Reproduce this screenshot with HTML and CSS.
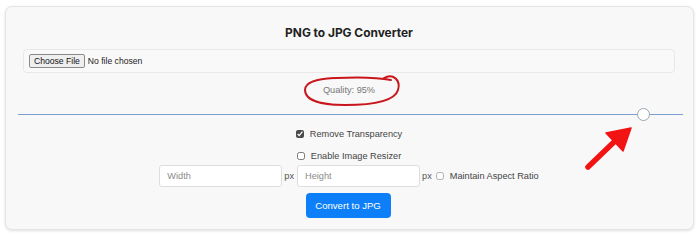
FILE: index.html
```html
<!DOCTYPE html>
<html lang="en">
<head>
<meta charset="utf-8">
<title>PNG to JPG Converter</title>
<link rel="stylesheet" href="styles.css">
</head>
<body>
<div class="card">
  <h1 class="title">PNG to JPG Converter</h1>
  <div class="file-box">
    <input type="file" class="file-input" accept="image/png">
  </div>
  <div class="quality">Quality: 95%</div>
  <input type="range" class="slider" min="0" max="100" value="95">
  <label class="check-row"><input type="checkbox" class="check" checked> Remove Transparency</label>
  <label class="check-row check-row-2"><input type="checkbox" class="check"> Enable Image Resizer</label>
  <div class="size-row">
    <input type="text" class="size-input" placeholder="Width">
    <span class="unit">px</span>
    <input type="text" class="size-input" placeholder="Height">
    <span class="unit">px</span>
    <label class="aspect"><input type="checkbox" class="check check-light"> Maintain Aspect Ratio</label>
  </div>
  <button class="convert">Convert to JPG</button>
</div>
<svg class="annot" width="700" height="235" viewBox="0 0 700 235">
  <path d="M384 78 C393 73, 401 80, 398 90 C395 100, 378 105, 345 105 C320 105, 305 100, 305 90 C305 82, 316 79, 336 78 C356 77, 376 77, 391 80" fill="none" stroke="#c8161c" stroke-width="2" stroke-linecap="round"/>
  <line x1="588" y1="167" x2="614" y2="142" stroke="#f21313" stroke-width="5.5" stroke-linecap="round"/>
  <polygon points="631,128 606,133 623,151" fill="#f21313" stroke="#f21313" stroke-width="1.5" stroke-linejoin="round"/>
</svg>
</body>
</html>
```
FILE: styles.css
```css
html, body {
  margin: 0;
  padding: 0;
  background: #ffffff;
}
body {
  font-family: "Liberation Sans", Arial, sans-serif;
  width: 700px;
  height: 235px;
  position: relative;
  overflow: hidden;
}
.card {
  box-sizing: border-box;
  margin: 6px 0 0 5px;
  width: 689px;
  height: 224px;
  background: #f8f8f8;
  border: 1px solid #e4e4e4;
  border-radius: 7px;
  box-shadow: 0 1px 3px rgba(0, 0, 0, 0.13);
  padding: 0 18px 0 17px;
  display: flex;
  flex-direction: column;
  align-items: stretch;
}
.title {
  margin: 16px 0 0;
  font-family: Inter, "Open Sans", sans-serif;
  font-weight: 700;
  font-size: 11.9px;
  line-height: 20px;
  color: #222;
  text-align: center;
}
.file-box {
  margin-top: 6px;
  height: 24px;
  box-sizing: border-box;
  background: #f9f9f9;
  border: 1px solid #e8e8e8;
  border-radius: 4px;
  display: flex;
  align-items: center;
  padding-left: 5px;
}
.file-input {
  font-family: "Liberation Sans", Arial, sans-serif;
  font-size: 8.6px;
  color: #222;
}
.file-input::file-selector-button {
  font-family: "Liberation Sans", Arial, sans-serif;
  font-size: 8.6px;
  background: #efefef;
  border: 1px solid #8a8a8a;
  border-radius: 2px;
  padding: 1px 4px;
  margin-right: 3px;
  color: #111;
}
.quality {
  margin-top: 10px;
  text-align: center;
  font-size: 9.2px;
  line-height: 14px;
  color: #777;
}
.slider {
  -webkit-appearance: none;
  appearance: none;
  margin: 11px -8px 0 -5px;
  height: 13px;
  background: transparent;
}
.slider::-webkit-slider-runnable-track {
  height: 1px;
  background: #7b9fcf;
}
.slider::-webkit-slider-thumb {
  -webkit-appearance: none;
  width: 13px;
  height: 13px;
  margin-top: -6px;
  border-radius: 50%;
  background: #ffffff;
  border: 1px solid #9aa6b4;
  box-sizing: border-box;
}
.check-row {
  margin-top: 6px;
  display: flex;
  justify-content: center;
  align-items: center;
  gap: 3px;
  font-size: 9.2px;
  line-height: 14px;
  color: #444;
}
.check-row-2 {
  margin-top: 8px;
}
.check {
  width: 8px;
  height: 8px;
  margin: 0 3px 0 0;
  accent-color: #4a4a4a;
}
.check-light {
  opacity: 0.55;
}
.size-row {
  margin-top: 2px;
  display: flex;
  justify-content: center;
  align-items: center;
  font-size: 9.2px;
  color: #444;
}
.size-input {
  box-sizing: border-box;
  width: 123px;
  height: 22px;
  background: #fff;
  border: 1px solid #dedede;
  border-radius: 3px;
  padding: 0 7px;
  font-family: "Liberation Sans", Arial, sans-serif;
  font-size: 9.2px;
  color: #333;
  outline: none;
}
.size-input::placeholder {
  color: #8a8a8a;
}
.unit {
  margin: 0 3px 0 2px;
  color: #555;
}
.aspect {
  display: flex;
  align-items: center;
  gap: 3px;
  margin-left: 1px;
  color: #444;
}
.convert {
  align-self: center;
  margin-top: 6px;
  width: 85px;
  height: 25px;
  background: #0d80f9;
  border: none;
  border-radius: 4px;
  color: #fff;
  font-family: "Liberation Sans", Arial, sans-serif;
  font-size: 9.6px;
  padding: 0;
  margin-left: -2px;
}
.annot {
  position: absolute;
  left: 0;
  top: 0;
  pointer-events: none;
}
```
